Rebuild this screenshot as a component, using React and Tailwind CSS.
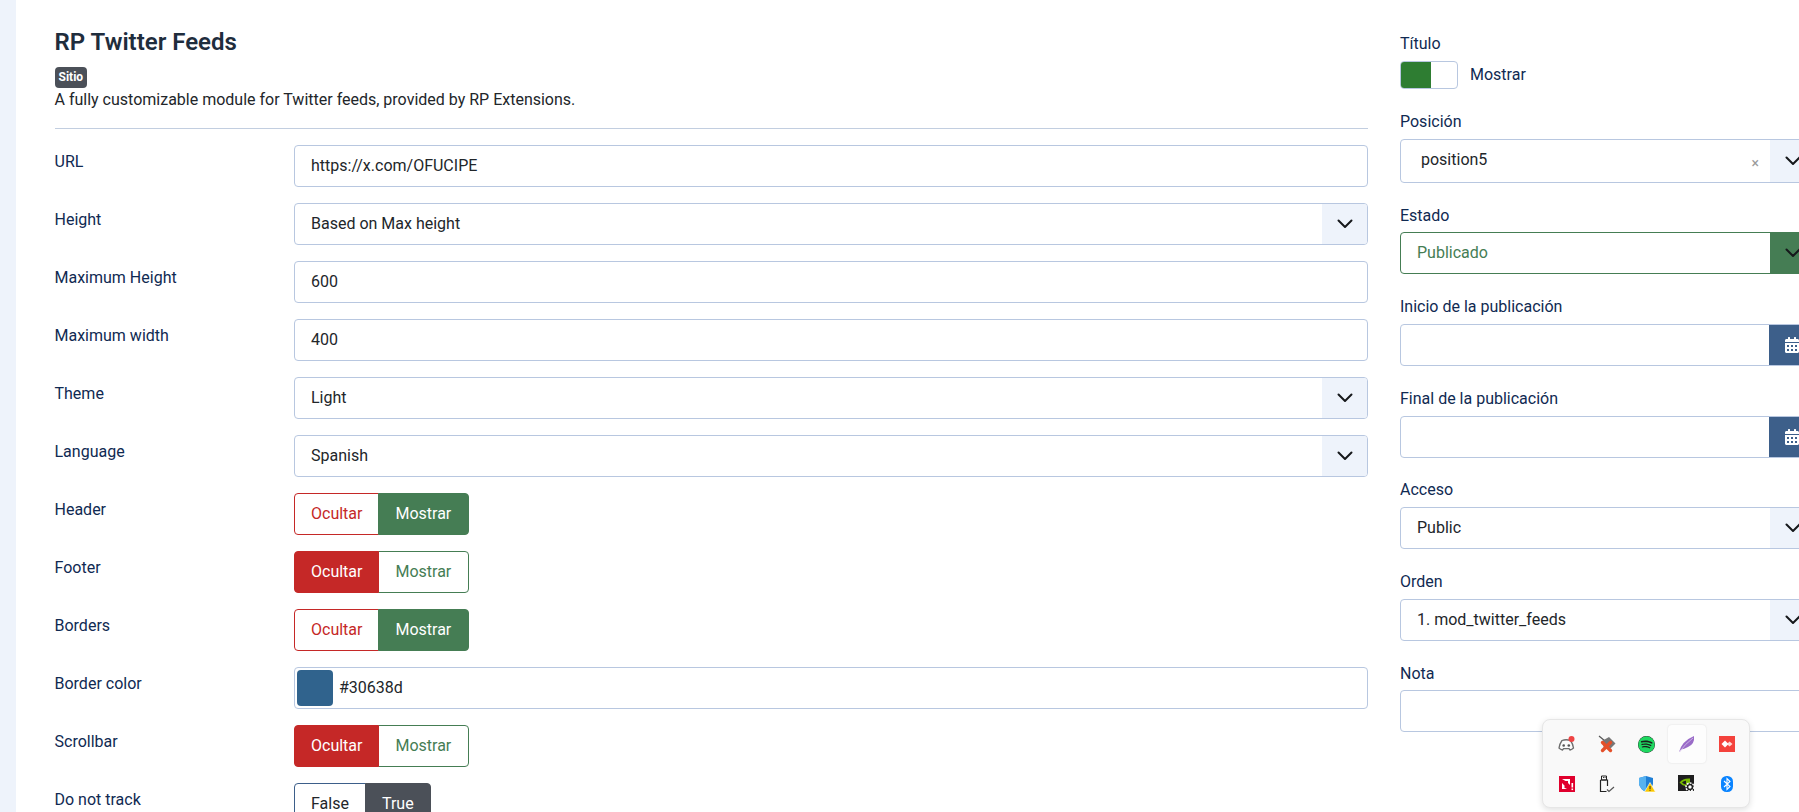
import React from "react";
import { FaCalendarAlt, FaSpotify } from "react-icons/fa";

const Chevron = () => (
  <svg width="16" height="10" viewBox="0 0 16 10" fill="none" stroke="#16181b" strokeWidth="2" strokeLinecap="round" strokeLinejoin="round">
    <path d="M1.5 1.5 L8 8 L14.5 1.5" />
  </svg>
);

const Label = ({ children, className = "", nudge }) => (
  <div className={`h-[25px] leading-6 text-[#102a52] ${nudge ? "pt-[2px]" : "pt-px"} ${className}`}>{children}</div>
);

const TextBox = ({ children }) => (
  <div className="flex h-[42px] items-center rounded border border-[#b8c7e0] bg-white px-4 text-[#22262a]">{children}</div>
);

const SelectBox = ({ children }) => (
  <div className="flex h-[42px] items-stretch overflow-hidden rounded border border-[#b8c7e0] bg-white text-[#22262a]">
    <div className="flex flex-1 items-center px-4">{children}</div>
    <div className="flex w-[45px] items-center justify-center bg-[#eef3fb]"><Chevron /></div>
  </div>
);

const Seg = ({ label, active, tone, first }) => {
  const tones = {
    red: active ? "border-[#c52827] bg-[#c52827] pr-4 text-white" : "border-[#c52827] bg-white pr-4 text-[#c52827]",
    green: active ? "border-[#457d54] bg-[#457d54] pr-[17px] text-white" : "border-[#457d54] bg-white pr-[17px] text-[#457d54]",
    blue: "border-[#3d5f8a] bg-white pr-4 text-[#22262a]",
    dark: "border-[#4b5058] bg-[#4b5058] pr-4 text-white",
  };
  return (
    <div
      className={`relative flex h-[42px] items-center border pl-4 ${tones[tone]} ${active ? "z-10" : "z-0"} ${first ? "rounded-l" : "-ml-px rounded-r"}`}
    >
      {label}
    </div>
  );
};

const ShowHide = ({ show }) => (
  <div className="flex">
    <Seg label="Ocultar" tone="red" active={!show} first />
    <Seg label="Mostrar" tone="green" active={show} />
  </div>
);

const Row = ({ label, children }) => (
  <div className="mb-4 flex">
    <div className="w-[239.5px] shrink-0 pt-1"><Label>{label}</Label></div>
    <div className="flex-1">{children}</div>
  </div>
);

const Field = ({ label, children, className = "mb-[19.6px]", nudge }) => (
  <div className={className}>
    <Label className="mb-[5px]" nudge={nudge}>{label}</Label>
    {children}
  </div>
);

const DateBox = () => (
  <div className="flex h-[42px] items-stretch overflow-hidden rounded border border-[#b8c7e0] bg-white">
    <div className="flex-1" />
    <div className="-my-px flex w-[46px] items-center justify-center bg-[#3d5f8a] text-white"><FaCalendarAlt size={16} /></div>
  </div>
);

const Discord = () => (
  <svg width="20" height="18" viewBox="0 0 20 18">
    <path d="M5 5.5 Q9 4 13.5 5.5 Q16 9 16.5 13 Q15 14.5 13 15 L12 13.6 H6.6 L5.5 15 Q3.5 14.5 2 13 Q2.5 9 5 5.5Z" fill="#fbfbfb" stroke="#6d6d6d" strokeWidth="1.3" />
    <circle cx="6.7" cy="10.5" r="1.3" fill="#555" />
    <circle cx="11.8" cy="10.5" r="1.3" fill="#555" />
    <circle cx="14.5" cy="4" r="3" fill="#ef4444" />
  </svg>
);

const MutedCast = () => (
  <svg width="18" height="18" viewBox="0 0 18 18">
    <path d="M1 1 L7 6" stroke="#555" strokeWidth="1.2" />
    <path d="M4 6 L11 2 L17.5 8.5 L13 13 L6 13 Z" fill="#777" />
    <path d="M4.5 7.5 L12.5 15.5 M12.5 7.5 L4.5 15.5" stroke="#e4502a" strokeWidth="3.4" strokeLinecap="round" />
  </svg>
);

const Feather = () => (
  <svg width="18" height="18" viewBox="0 0 18 18">
    <path d="M1 17 Q4 6 16 1 Q17 9 10 12 Q6 14 3 14.5 Z" fill="#9a6cc8" />
    <path d="M1.5 17 Q7 9 15 3" stroke="#d6c0ea" strokeWidth="0.8" fill="none" />
  </svg>
);

const RedCast = () => (
  <svg width="16" height="16" viewBox="0 0 16 16">
    <rect width="16" height="16" fill="#f4423c" />
    <path d="M8 8 L10.5 5.5 L13.5 8 L10.5 10.5 Z" fill="#ffd9d6" />
    <path d="M2.5 8 L6 4.5 L9.5 8 L6 11.5 Z" fill="#fff" />
  </svg>
);

const Amd = () => (
  <svg width="16" height="16" viewBox="0 0 16 16">
    <rect width="16" height="16" fill="#e0002d" />
    <path d="M3 3 H11 V9 L9 7 V5 H6.5 Z M3 7 L5.5 9.5 V12 H8 L6 13 H3 Z" fill="#fff" />
    <rect x="12.5" y="7" width="1.6" height="4.5" fill="#fff" />
    <rect x="12.5" y="12.5" width="1.6" height="1.6" fill="#fff" />
  </svg>
);

const Usb = () => (
  <svg width="18" height="18" viewBox="0 0 18 18" fill="none">
    <path d="M3.5 1 H8.5 V5 H3.5 Z M5 2.5 H5.9 M6.6 2.5 H7.5" stroke="#222" strokeWidth="1" />
    <path d="M2.5 5 H9.5 V11 M2.5 5 V16.5 H8.5" stroke="#222" strokeWidth="1.2" />
    <path d="M9 14.5 L11 16.5 L16 12" stroke="#555" strokeWidth="1.2" />
  </svg>
);

const Shield = () => (
  <svg width="18" height="18" viewBox="0 0 18 18">
    <path d="M8 1 L15 3 V9 Q14 14 8 17 Q2 14 1 9 V3 Z" fill="#1f7fd6" />
    <path d="M8 1 V17 Q2 14 1 9 V3 Z" fill="#56b2f0" />
    <path d="M12 7.5 L17.5 17 H6.5 Z" fill="#fbc800" stroke="#fff" strokeWidth="0.6" />
    <rect x="11.5" y="11" width="1" height="3" fill="#222" />
    <rect x="11.5" y="14.7" width="1" height="1" fill="#222" />
  </svg>
);

const Nvidia = () => (
  <svg width="18" height="18" viewBox="0 0 18 18">
    <rect width="16" height="16" fill="#1e1e1e" />
    <path d="M1.5 7.5 Q5 3 12 3.5 V11 H7 Q4 10.5 1.5 7.5Z" fill="#76b900" />
    <path d="M4 7.5 Q6 5.5 8 5.7 V9.5 Q6 9.5 4 7.5Z" fill="#1e1e1e" />
    <circle cx="12" cy="12" r="4" fill="#1e1e1e" stroke="#fff" strokeWidth="1.5" strokeDasharray="2 1" />
    <circle cx="12" cy="12" r="1.7" fill="#fff" />
  </svg>
);

const Bluetooth = () => (
  <svg width="12" height="16" viewBox="0 0 12 16">
    <rect width="12" height="16" rx="5.5" fill="#0a84ff" />
    <path d="M3 5 L9 10.5 L6 13.5 V2.5 L9 5.5 L3 11" fill="none" stroke="#fff" strokeWidth="1.1" />
  </svg>
);

const TrayCell = ({ children, hover }) => (
  <div
    className={`flex h-[38px] w-[38px] items-center justify-center rounded ${hover ? "bg-[#fdfdfd] shadow-[0_0_2px_rgba(0,0,0,0.12)]" : ""}`}
  >
    {children}
  </div>
);

export default function App() {
  return (
    <div className="relative flex h-[812px] w-[1799px] overflow-hidden bg-[#eef3fb] font-['Roboto',sans-serif] text-base text-[#22262a]">
      <div className="w-4 shrink-0" />
      <main className="flex flex-1 items-start gap-8 overflow-hidden bg-white pl-[38.5px] pt-[27px]">
        <section className="w-[1313.5px] shrink-0">
          <h2 className="pt-px text-2xl font-semibold leading-[29px] text-[#1f2d3d]">RP Twitter Feeds</h2>
          <div className="mt-[10px] inline-block h-[21px] rounded bg-[#4b5058] px-[4px] align-top text-xs font-bold leading-[21px] text-white">Sitio</div>
          <p className="block h-6 leading-6">A fully customizable module for Twitter feeds, provided by RP Extensions.</p>
          <hr className="mb-4 mt-4 border-t border-[#c2cee0]" />

          <Row label="URL"><TextBox>https://x.com/OFUCIPE</TextBox></Row>
          <Row label="Height"><SelectBox>Based on Max height</SelectBox></Row>
          <Row label="Maximum Height"><TextBox>600</TextBox></Row>
          <Row label="Maximum width"><TextBox>400</TextBox></Row>
          <Row label="Theme"><SelectBox>Light</SelectBox></Row>
          <Row label="Language"><SelectBox>Spanish</SelectBox></Row>
          <Row label="Header"><ShowHide show /></Row>
          <Row label="Footer"><ShowHide /></Row>
          <Row label="Borders"><ShowHide show /></Row>
          <Row label="Border color">
            <div className="flex h-[42px] items-center rounded border border-[#b8c7e0] bg-white pl-[2px] text-[#22262a]">
              <div className="h-9 w-9 rounded-sm bg-[#30638d]" />
              <span className="ml-[6px]">#30638d</span>
            </div>
          </Row>
          <Row label="Scrollbar"><ShowHide /></Row>
          <Row label="Do not track">
            <div className="flex">
              <Seg label="False" tone="blue" first />
              <Seg label="True" tone="dark" active />
            </div>
          </Row>
        </section>

        <aside className="w-[416px] shrink-0 pt-1">
          <div className="mb-5">
            <Label className="mb-[5px]">Título</Label>
            <div className="flex items-center gap-3">
              <div className="flex h-7 w-[58px] overflow-hidden rounded border border-[#b8c7e0] bg-white">
                <div className="w-[30px] bg-[#2e7d32]" />
              </div>
              <span className="text-[#102a52]">Mostrar</span>
            </div>
          </div>

          <Field label="Posición" className="mb-[19.4px]">
            <div className="flex h-11 items-stretch overflow-hidden rounded border border-[#b8c7e0] bg-white text-[#22262a]">
              <div className="flex flex-1 items-center justify-between pb-[2px] pl-5 pr-[11px]">
                <span>position5</span>
                <span className="pt-[5px] text-sm leading-none text-[#9a9a9a]">×</span>
              </div>
              <div className="flex w-[45px] items-center justify-center bg-[#eef3fb]"><Chevron /></div>
            </div>
          </Field>

          <Field label="Estado" nudge>
            <div className="flex h-[42px] items-stretch overflow-hidden rounded border border-[#457d54] bg-white text-[#457d54]">
              <div className="flex flex-1 items-center px-4">Publicado</div>
              <div className="flex w-[45px] items-center justify-center bg-[#457d54]"><Chevron /></div>
            </div>
          </Field>

          <Field label="Inicio de la publicación"><DateBox /></Field>
          <Field label="Final de la publicación"><DateBox /></Field>
          <Field label="Acceso"><SelectBox>Public</SelectBox></Field>
          <Field label="Orden"><SelectBox>1. mod_twitter_feeds</SelectBox></Field>
          <Field label="Nota" nudge><div className="h-[42px] rounded border border-[#b8c7e0] bg-white" /></Field>
        </aside>
      </main>

      <div className="absolute left-[1541.5px] top-[719px] grid h-[89px] w-[208.5px] grid-cols-[repeat(5,38px)] content-start gap-[2px] rounded-lg border border-[#e6e6e6] bg-[#f9f9f9] pl-[5px] pt-[5px] shadow-[0_2px_6px_rgba(0,0,0,0.12)]">
        <TrayCell><Discord /></TrayCell>
        <TrayCell><MutedCast /></TrayCell>
        <TrayCell><FaSpotify size={17} className="rounded-full bg-[#1b1f1c] text-[#1ed760]" /></TrayCell>
        <TrayCell hover><Feather /></TrayCell>
        <TrayCell><RedCast /></TrayCell>
        <TrayCell><Amd /></TrayCell>
        <TrayCell><Usb /></TrayCell>
        <TrayCell><Shield /></TrayCell>
        <TrayCell><Nvidia /></TrayCell>
        <TrayCell><Bluetooth /></TrayCell>
      </div>
    </div>
  );
}
